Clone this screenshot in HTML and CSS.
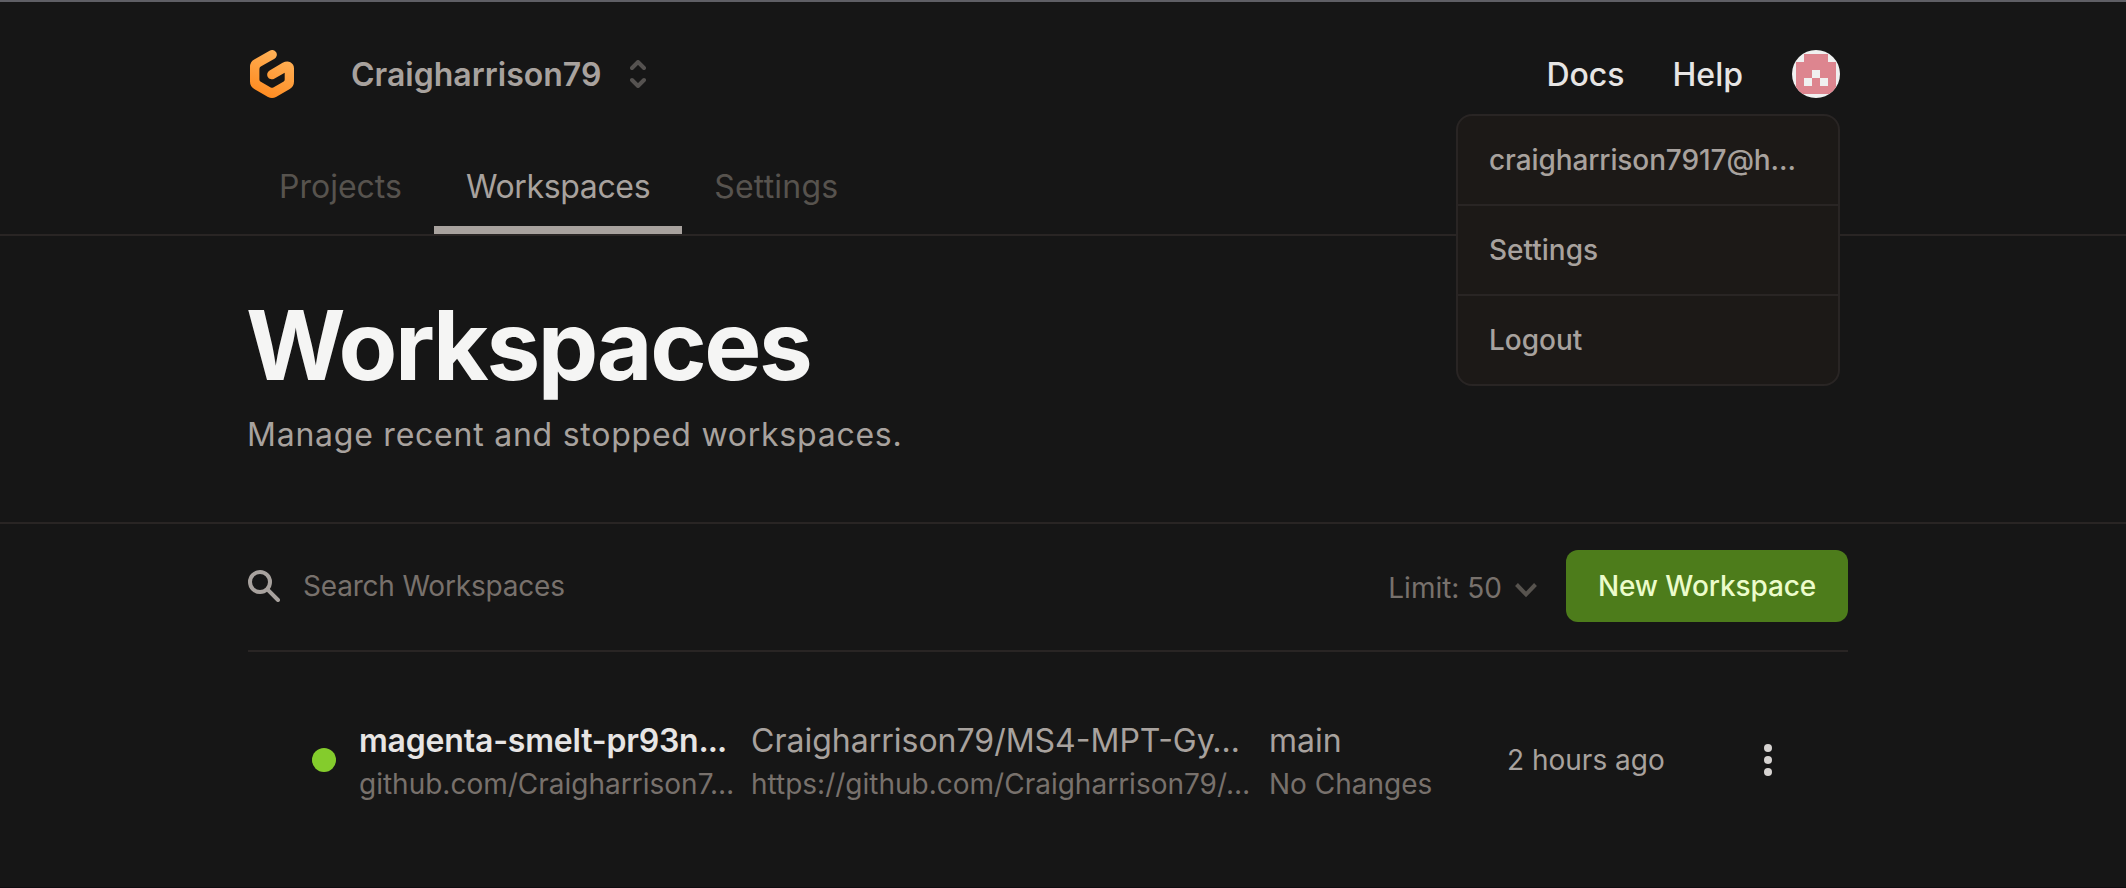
FILE: index.html
```
<!DOCTYPE html>
<html lang="en">
<head>
<meta charset="utf-8">
<title>Workspaces</title>
<link rel="stylesheet" href="styles.css">
</head>
<body>
<header class="header">
  <div class="container">
    <div class="topbar">
      <svg class="logo" viewBox="0 0 48 48">
        <defs><linearGradient id="brand" x1="0.7" y1="0" x2="0.3" y2="1"><stop offset="0" stop-color="#ffb45b"/><stop offset="1" stop-color="#ff8a1f"/></linearGradient></defs>
        <path fill="url(#brand)" d="M28.2 2.2A4.9 4.9 0 0 1 26.5 8.8L12.8 16.6Q11.4 17.4 11.4 19V29.4Q11.4 31 12.8 31.8L22.7 37.4Q24 38.1 25.3 37.4L35.3 31.8Q36.7 31 36.7 29.4V22.8L26.2 28.7A4.7 4.7 0 0 1 21.6 20.5L34.6 12.8Q38.9 10.4 42.4 12.2Q46 14.2 46 18.6V31.6Q46 36.6 41.8 39L28 46.9Q24 49.1 20 46.9L6.2 39Q2 36.6 2 31.6V17Q2 12 6.2 9.6L21.6 .7Q25.8-1.3 28.2 2.2Z"/>
      </svg>
      <span class="team">Craigharrison79</span>
      <svg class="switcher" viewBox="0 0 16 28"><path d="M2 8 8 2l6 6M2 20l6 6 6-6"/></svg>
      <nav class="links">
        <a>Docs</a>
        <a>Help</a>
      </nav>
      <div class="account">
        <svg class="avatar" viewBox="0 0 48 48">
          <defs><clipPath id="round"><circle cx="24" cy="24" r="24"/></clipPath></defs>
          <g clip-path="url(#round)">
            <path fill="#f0f0f0" d="M0 0h48v48H0z"/>
            <path fill="#dd858f" d="M12 4h24v8h8v32H4V12h8z"/>
            <path fill="#f0f0f0" d="M20 20h8v8h-8zM12 28h8v8h-8zM28 28h8v8h-8z"/>
          </g>
        </svg>
        <div class="menu">
          <div class="menu-item menu-email">craigharrison7917@h…</div>
          <div class="menu-item">Settings</div>
          <div class="menu-item">Logout</div>
        </div>
      </div>
    </div>
    <nav class="tabs">
      <a class="tab">Projects</a>
      <a class="tab tab-active">Workspaces</a>
      <a class="tab tab-last">Settings</a>
    </nav>
  </div>
</header>
<section class="hero">
  <div class="container">
    <h1 class="title">Workspaces</h1>
    <p class="subtitle">Manage recent and stopped workspaces.</p>
  </div>
</section>
<main class="container">
  <div class="toolbar">
    <svg class="search-icon" viewBox="0 0 32 32"><circle cx="12" cy="12" r="10"/><path d="M19.4 19.4 30 30"/></svg>
    <span class="placeholder">Search Workspaces</span>
    <span class="limit">Limit: 50</span>
    <svg class="chevron" viewBox="0 0 22 15"><path d="m1.5 1.5 9.5 9.8 9.5-9.8"/></svg>
    <button class="new">New Workspace</button>
  </div>
  <div class="row">
    <span class="status"></span>
    <div class="cell">
      <div class="primary primary-strong">magenta-smelt-pr93n<span class="dots">...</span></div>
      <div class="secondary">github.com/Craigharrison7…</div>
    </div>
    <div class="cell">
      <div class="primary">Craigharrison79/MS4-MPT-Gy…</div>
      <div class="secondary">https://github.com/Craigharrison79/…</div>
    </div>
    <div class="cell">
      <div class="primary">main</div>
      <div class="secondary">No Changes</div>
    </div>
    <span class="time">2 hours ago</span>
    <svg class="more" viewBox="0 0 8 32"><circle cx="4" cy="4" r="4"/><circle cx="4" cy="16" r="4"/><circle cx="4" cy="28" r="4"/></svg>
  </div>
</main>
</body>
</html>
```
FILE: styles.css
```
* { box-sizing: border-box; }
body {
  margin: 0;
  height: 888px;
  border-top: 2px solid #5f5f65;
  border-bottom: 1px solid #0f0d10;
  background: #161616;
  color: #a8a29e;
  font-family: Inter, "Liberation Sans", sans-serif;
  font-size: 32px;
  line-height: 48px;
  overflow: hidden;
}
.container { width: 1600px; margin-left: 248px; }
.header { border-bottom: 2px solid #292524; }
.topbar { display: flex; align-items: center; height: 144px; }
.logo { width: 48px; height: 48px; }
.team { margin-left: 55px; padding-top: 2px; font-weight: 600; }
.switcher { width: 16px; height: 28px; margin-left: 29px; fill: none; stroke: #555250; stroke-width: 4; stroke-linecap: round; stroke-linejoin: round; }
.links { display: flex; gap: 48px; margin-left: auto; padding-top: 2px; color: #e7e5e4; font-weight: 500; }
.account { position: relative; height: 48px; margin: 0 8px 0 49px; }
.avatar { display: block; width: 48px; height: 48px; }
.menu {
  position: absolute;
  top: 64px;
  right: 0;
  z-index: 1;
  width: 384px;
  border: 2px solid #292524;
  border-radius: 16px;
  background: #1c1917;
  font-size: 28px;
  font-weight: 500;
  line-height: 40px;
}
.menu-item { padding: 24px 31px; white-space: nowrap; }
.menu-item + .menu-item { border-top: 2px solid #292524; }
.menu-email { letter-spacing: -0.1px; }
.tabs { display: flex; height: 88px; margin-left: -1px; }
.tab { padding: 17px 32px 15px; border-bottom: 8px solid transparent; color: #57534e; }
.tab-active { border-color: #a8a29e; color: #a8a29e; letter-spacing: -0.35px; }
.tab-last { letter-spacing: 0.2px; }
.hero { height: 288px; padding-top: 61px; border-bottom: 2px solid #292524; }
.title { margin: 0 0 0 -2px; color: #f5f5f4; font-size: 96px; font-weight: 700; line-height: 96px; letter-spacing: -0.025em; }
.subtitle { margin: 18px 0 0 -1px; letter-spacing: 0.76px; }
.toolbar { display: flex; align-items: center; height: 128px; padding-bottom: 2px; border-bottom: 2px solid #292524; font-size: 28px; }
.search-icon { width: 32px; height: 32px; fill: none; stroke: #a8a29e; stroke-width: 4; stroke-linecap: round; }
.placeholder { margin-left: 23px; color: #78716c; letter-spacing: -0.2px; }
.limit { margin: 3px 0 0 auto; color: #78716c; }
.chevron { width: 22px; height: 15px; margin: 8px 29px 0 13px; fill: none; stroke: #57534e; stroke-width: 4; }
.new { width: 282px; height: 72px; padding: 0; border: 0; border-radius: 12px; background: #4d7c1b; color: #ecfccb; font: 500 28px/40px Inter, "Liberation Sans", sans-serif; letter-spacing: -0.1px; }
.row {
  display: grid;
  grid-template-columns: 48px 392px 518px 237px 257px 8px;
  align-items: center;
  padding: 64px 0 0 64px;
}
.status { width: 24px; height: 24px; border-radius: 50%; background: #84cc2c; }
.cell { margin-left: -1px; white-space: nowrap; }
.primary { padding-top: 1px; height: 48px; }
.primary-strong { color: #e7e5e4; font-weight: 600; letter-spacing: -0.2px; }
.dots { letter-spacing: -0.9px; }
.secondary { color: #78716c; font-size: 28px; line-height: 40px; }
.time { font-size: 28px; }
.more { width: 8px; height: 32px; fill: #d6d3d1; }
```
